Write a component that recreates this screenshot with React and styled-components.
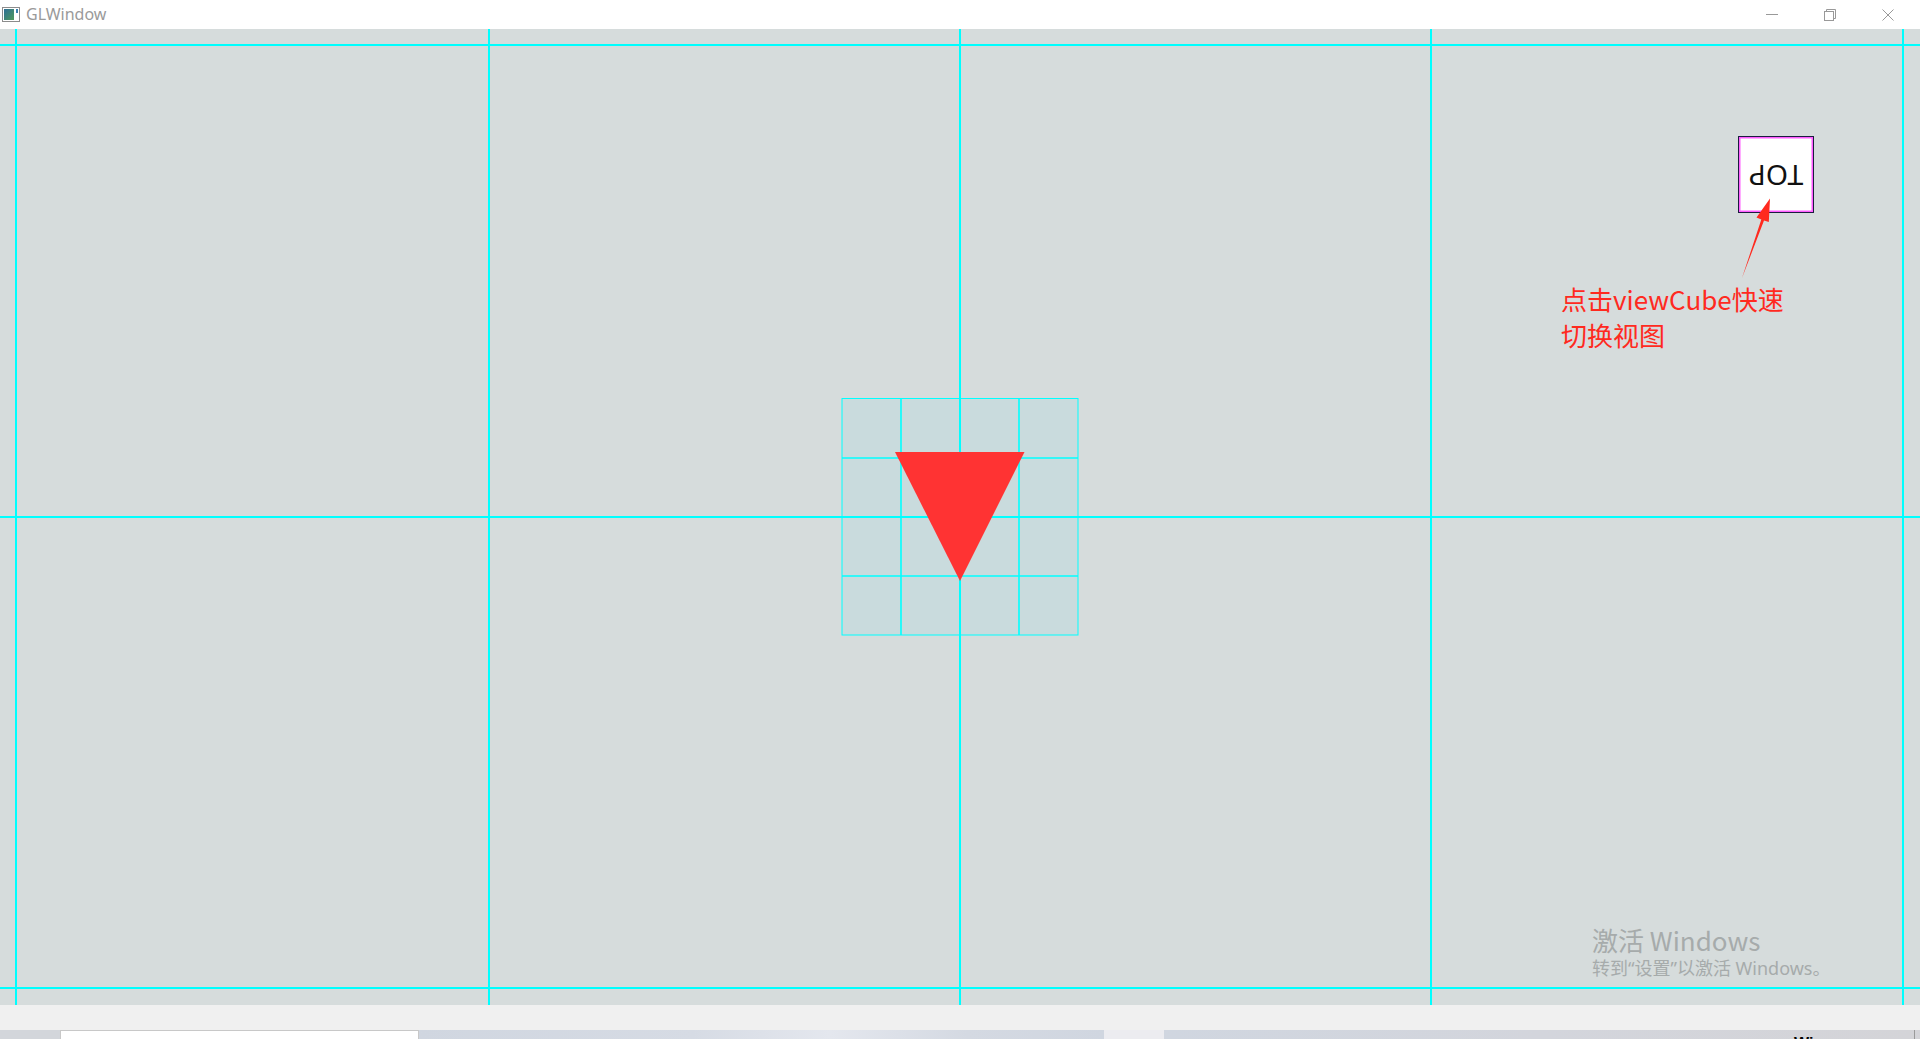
import React from "react";
import styled, { createGlobalStyle } from "styled-components";

const Global = createGlobalStyle`
  html, body { margin: 0; padding: 0; background: #f0f0f0; overflow: hidden; }
  #root { width: 1920px; height: 1039px; }
`;

const Page = styled.div`
  width: 1920px;
  height: 1039px;
  display: flex;
  flex-direction: column;
  overflow: hidden;
`;

const TitleBar = styled.div`
  height: 29px;
  flex: none;
  background: #ffffff;
  display: flex;
  align-items: center;
  justify-content: space-between;
`;

const TitleLeft = styled.div`
  display: flex;
  align-items: center;
  gap: 6px;
  padding-left: 2px;
`;

const TitleText = styled.span`
  font-family: "Noto Sans", "Open Sans", sans-serif;
  font-size: 16px;
  color: #9a9a9a;
  line-height: 29px;
`;

const Controls = styled.div`
  display: flex;
  align-items: center;
  padding-right: 3px;
  height: 29px;
`;

const ControlButton = styled.div`
  width: 58px;
  height: 29px;
  display: flex;
  align-items: center;
  justify-content: center;
`;

const Viewport = styled.div`
  position: relative;
  height: 976px;
  flex: none;
  background: #d6dcdc;
  overflow: hidden;
`;

const Drawing = styled.svg`
  display: block;
`;

const ViewCube = styled.div`
  position: absolute;
  left: 1738px;
  top: 107px;
  width: 76px;
  height: 77px;
  box-sizing: border-box;
  background: #ffffff;
  border: 1px solid #1c1c40;
  box-shadow: inset 0 0 0 1.5px #ff5cff;
  display: flex;
  align-items: center;
  justify-content: center;
`;

const CubeLabel = styled.span`
  font-family: "Noto Sans", "Liberation Sans", sans-serif;
  font-size: 27px;
  color: #111111;
  transform: rotate(180deg) scaleX(1.05);
  line-height: 1;
  margin-top: 2px;
`;

const ArrowOverlay = styled.svg`
  position: absolute;
  left: 1735px;
  top: 160px;
  overflow: visible;
`;

const Annotation = styled.div`
  position: absolute;
  left: 1561px;
  top: 252px;
  font-family: "Noto Sans CJK SC", sans-serif;
  font-size: 26px;
  line-height: 36px;
  color: #ff2a1f;
  white-space: nowrap;
`;

const Watermark = styled.div`
  position: absolute;
  left: 1592px;
  top: 894px;
  color: #a6abab;
  white-space: nowrap;
  display: flex;
  flex-direction: column;
`;

const WatermarkTitle = styled.span`
  font-family: "Noto Sans CJK SC", sans-serif;
  font-size: 26px;
  line-height: 34px;
`;

const WatermarkSub = styled.span`
  font-family: "Noto Sans", "Noto Sans CJK SC", sans-serif;
  font-size: 18px;
  line-height: 22px;
`;

const StatusBand = styled.div`
  height: 25px;
  flex: none;
  background: #f0f0f0;
`;

const Taskbar = styled.div`
  height: 9px;
  flex: none;
  display: flex;
`;

const Segment = styled.div`
  width: ${(p) => p.$w}px;
  flex: none;
  background: ${(p) => p.$bg};
  box-sizing: border-box;
  border: ${(p) => (p.$border ? "1px solid #c8c8c8" : "none")};
  border-bottom: none;
  overflow: hidden;
`;

const ClippedText = styled.span`
  display: block;
  margin-left: 630px;
  margin-top: 6px;
  font-family: "Liberation Sans", Arial, sans-serif;
  font-weight: bold;
  font-size: 16px;
  line-height: 16px;
  color: #000;
`;

const Divider = styled.div`
  width: 1px;
  flex: none;
  background: #9a9a9a;
`;

const CYAN = "#00ffff";

function ViewportDrawing() {
  const vLines = [16, 489, 960, 1431, 1903];
  const hLines = [16, 488, 959];
  return (
    <Drawing width="1920" height="976" viewBox="0 0 1920 976">
      <rect x="842" y="369" width="236" height="237" fill="#c9dbdd" />
      {vLines.map((x) => (
        <line key={"v" + x} x1={x} y1="0" x2={x} y2="976" stroke={CYAN} strokeWidth="2" />
      ))}
      {hLines.map((y) => (
        <line key={"h" + y} x1="0" y1={y} x2="1920" y2={y} stroke={CYAN} strokeWidth="2" />
      ))}
      <rect x="842" y="369.5" width="236" height="236.5" fill="none" stroke={CYAN} strokeWidth="1" />
      <line x1="901" y1="369" x2="901" y2="606" stroke={CYAN} strokeWidth="1.6" />
      <line x1="1019" y1="369" x2="1019" y2="606" stroke={CYAN} strokeWidth="1.6" />
      <line x1="842" y1="429" x2="1078" y2="429" stroke={CYAN} strokeWidth="1.6" />
      <line x1="842" y1="547" x2="1078" y2="547" stroke={CYAN} strokeWidth="1.6" />
      <polygon points="895,423 1024.5,423 960,552" fill="#ff3333" />
    </Drawing>
  );
}

function AppIcon() {
  return (
    <svg width="18" height="15" viewBox="0 0 18 15">
      <defs>
        <linearGradient id="ig" x1="0" y1="0" x2="1" y2="1">
          <stop offset="0" stopColor="#2d6f96" />
          <stop offset="1" stopColor="#4f9a5a" />
        </linearGradient>
      </defs>
      <rect x="0.5" y="0.5" width="17" height="14" fill="#ffffff" stroke="#8c8c8c" />
      <rect x="2" y="2" width="10" height="11" fill="url(#ig)" />
      <rect x="14" y="2" width="2" height="4" fill="#3a7fb0" />
    </svg>
  );
}

export default function App() {
  return (
    <>
      <Global />
      <Page>
        <TitleBar>
          <TitleLeft>
            <AppIcon />
            <TitleText>GLWindow</TitleText>
          </TitleLeft>
          <Controls>
            <ControlButton>
              <svg width="12" height="12" viewBox="0 0 12 12">
                <line x1="0" y1="5.5" x2="12" y2="5.5" stroke="#999" strokeWidth="1" />
              </svg>
            </ControlButton>
            <ControlButton>
              <svg width="12" height="12" viewBox="0 0 12 12">
                <rect x="0.5" y="2.5" width="9" height="9" fill="none" stroke="#999" />
                <path d="M2.5 2.5 V0.5 H11.5 V9.5 H9.5" fill="none" stroke="#999" />
              </svg>
            </ControlButton>
            <ControlButton>
              <svg width="12" height="12" viewBox="0 0 12 12">
                <path d="M0.5 0.5 L11.5 11.5 M11.5 0.5 L0.5 11.5" stroke="#999" strokeWidth="1" />
              </svg>
            </ControlButton>
          </Controls>
        </TitleBar>
        <Viewport>
          <ViewportDrawing />
          <ViewCube>
            <CubeLabel>TOP</CubeLabel>
          </ViewCube>
          <ArrowOverlay width="45" height="95" viewBox="0 0 45 95">
            <polygon
              points="7,89 26.3,30.5 21.5,28.5 35,9.5 33.8,33 29,31.6"
              fill="#ff2a1f"
            />
          </ArrowOverlay>
          <Annotation>
            点击viewCube快速
            <br />
            切换视图
          </Annotation>
          <Watermark>
            <WatermarkTitle>激活 Windows</WatermarkTitle>
            <WatermarkSub>转到“设置”以激活 Windows。</WatermarkSub>
          </Watermark>
        </Viewport>
        <StatusBand />
        <Taskbar>
          <Segment $w={60} $bg="#d3d6db" />
          <Segment $w={359} $bg="#ffffff" $border />
          <Segment $w={685} $bg="linear-gradient(90deg, #d0d6e0 0%, #d6dbe4 40%, #e4e7ee 60%, #d4d9e2 80%, #d0d6e0 100%)" />
          <Segment $w={60} $bg="#ececf0" />
          <Segment $w={750} $bg="linear-gradient(90deg, #d0d6e0 0%, #d3d5dc 50%, #d4d4d8 100%)">
            <ClippedText>Wi</ClippedText>
          </Segment>
          <Divider />
          <Segment $w={5} $bg="#d4d4d8" />
        </Taskbar>
      </Page>
    </>
  );
}
